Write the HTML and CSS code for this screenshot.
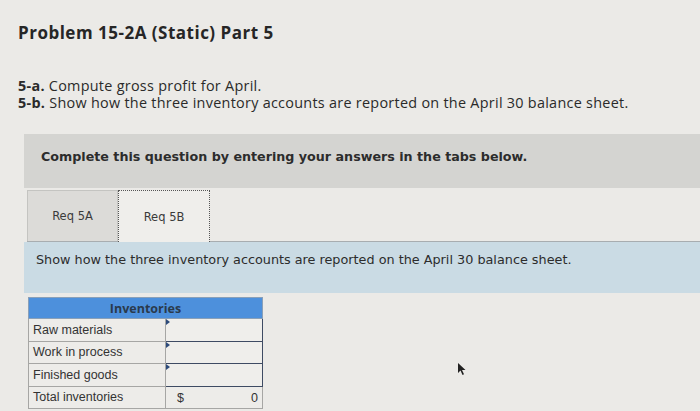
FILE: index.html
```html
<!DOCTYPE html>
<html>
<head>
<meta charset="utf-8">
<link rel="stylesheet" href="styles.css">
</head>
<body>
<div class="page">
  <h1 class="title">Problem 15-2A (Static) Part 5</h1>
  <div class="parts">
    <p><b>5-a.</b> Compute gross profit for April.</p>
    <p><b>5-b.</b> Show how the three inventory accounts are reported on the April 30 balance sheet.</p>
  </div>
  <div class="banner">Complete this question by entering your answers in the tabs below.</div>
  <div class="tabs">
    <div class="tab">Req 5A</div>
    <div class="tab active">Req 5B</div>
  </div>
  <div class="instr">Show how the three inventory accounts are reported on the April 30 balance sheet.</div>
  <table class="inv">
    <tr><th colspan="2">Inventories</th></tr>
    <tr><td class="lbl">Raw materials</td><td class="in"><span class="mark"></span></td></tr>
    <tr><td class="lbl">Work in process</td><td class="in"><span class="mark"></span></td></tr>
    <tr><td class="lbl">Finished goods</td><td class="in"><span class="mark"></span></td></tr>
    <tr><td class="lbl">Total inventories</td><td class="tot"><span class="dol">$</span><span class="zero">0</span></td></tr>
  </table>
  <svg class="cursor" width="12" height="14" viewBox="0 0 12 14"><path d="M1 1 L1 11 L3.5 8.5 L5.5 13 L7 12.3 L5 8 L8.5 8 Z" fill="#222"/></svg>
</div>
</body>
</html>
```

FILE: styles.css
```css
html, body { margin: 0; padding: 0; }
body { background: #ebeae7; width: 700px; height: 411px; overflow: hidden; }
.page { position: relative; height: 411px; }
.title {
  margin: 0;
  padding: 22px 0 0 18px;
  font-family: "Open Sans", "Liberation Sans", sans-serif;
  font-weight: 700;
  font-size: 17px;
  letter-spacing: 0.5px;
  line-height: 22px;
  color: #262626;
}
.parts {
  margin: 33px 0 0 18px;
  font-family: "Open Sans", "Liberation Sans", sans-serif;
  font-size: 14.4px;
  letter-spacing: 0.28px;
  line-height: 17px;
  color: #2a2a2a;
}
.parts p { margin: 0; }
.parts b { font-weight: 700; }
.banner {
  margin: 23px 0 0 24px;
  height: 54px;
  box-sizing: border-box;
  padding: 15px 0 0 17px;
  background: #d4d4d1;
  font-family: "DejaVu Sans", Verdana, sans-serif;
  font-weight: 700;
  font-size: 12.7px;
  line-height: 16px;
  color: #2c2c2c;
}
.tabs {
  display: flex;
  margin: 2px 0 0 27px;
  height: 51px;
  border-bottom: 1px solid #a8adb0;
}
.tab {
  width: 91px;
  box-sizing: border-box;
  display: flex;
  align-items: center;
  justify-content: center;
  background: #dcdbd8;
  border: 1px solid #c4c4c1;
  border-bottom: none;
  font-family: "DejaVu Sans", Verdana, sans-serif;
  font-size: 11.5px;
  color: #3a3a3a;
}
.tab.active {
  width: 92px;
  background: #efeeeb;
  border: 1px dotted #555;
  border-bottom: none;
  position: relative;
  z-index: 1;
  height: 52px;
}
.instr {
  margin-left: 24px;
  height: 51px;
  box-sizing: border-box;
  padding: 10px 0 0 12px;
  background: #cadbe4;
  font-family: "DejaVu Sans", Verdana, sans-serif;
  font-size: 12.8px;
  line-height: 16px;
  color: #2c2c2c;
}
.inv {
  margin: 4px 0 0 28px;
  border-collapse: collapse;
  font-family: "Liberation Sans", Arial, sans-serif;
  font-size: 12.5px;
  color: #333;
}
.inv th {
  height: 20px;
  padding: 0;
  background: #4d90dc;
  border: 1px solid #8aa0b8;
  font-family: "Open Sans", "Liberation Sans", sans-serif;
  font-weight: 700;
  font-size: 12.5px;
  color: #2a3a4c;
  text-align: center;
}
.inv td {
  height: 21.5px;
  padding: 0;
  border: 1px solid #a6a6a4;
}
.inv .lbl {
  width: 137px;
  padding-left: 4px;
  box-sizing: border-box;
  background: #edece9;
}
.inv .in {
  width: 96px;
  position: relative;
  background: #efeeeb;
  border: 1.5px solid #3e4b63;
}
.mark {
  position: absolute;
  left: 0;
  top: 0;
  width: 0;
  height: 0;
  border-top: 3px solid transparent;
  border-bottom: 3px solid transparent;
  border-left: 4px solid #2c4a7a;
}
.inv .tot {
  width: 96px;
  background: #edece9;
}
.tot { position: relative; }
.dol { position: absolute; left: 11px; top: 4px; }
.zero { position: absolute; right: 4px; top: 4px; }
.cursor { position: absolute; left: 457px; top: 362px; }
```
